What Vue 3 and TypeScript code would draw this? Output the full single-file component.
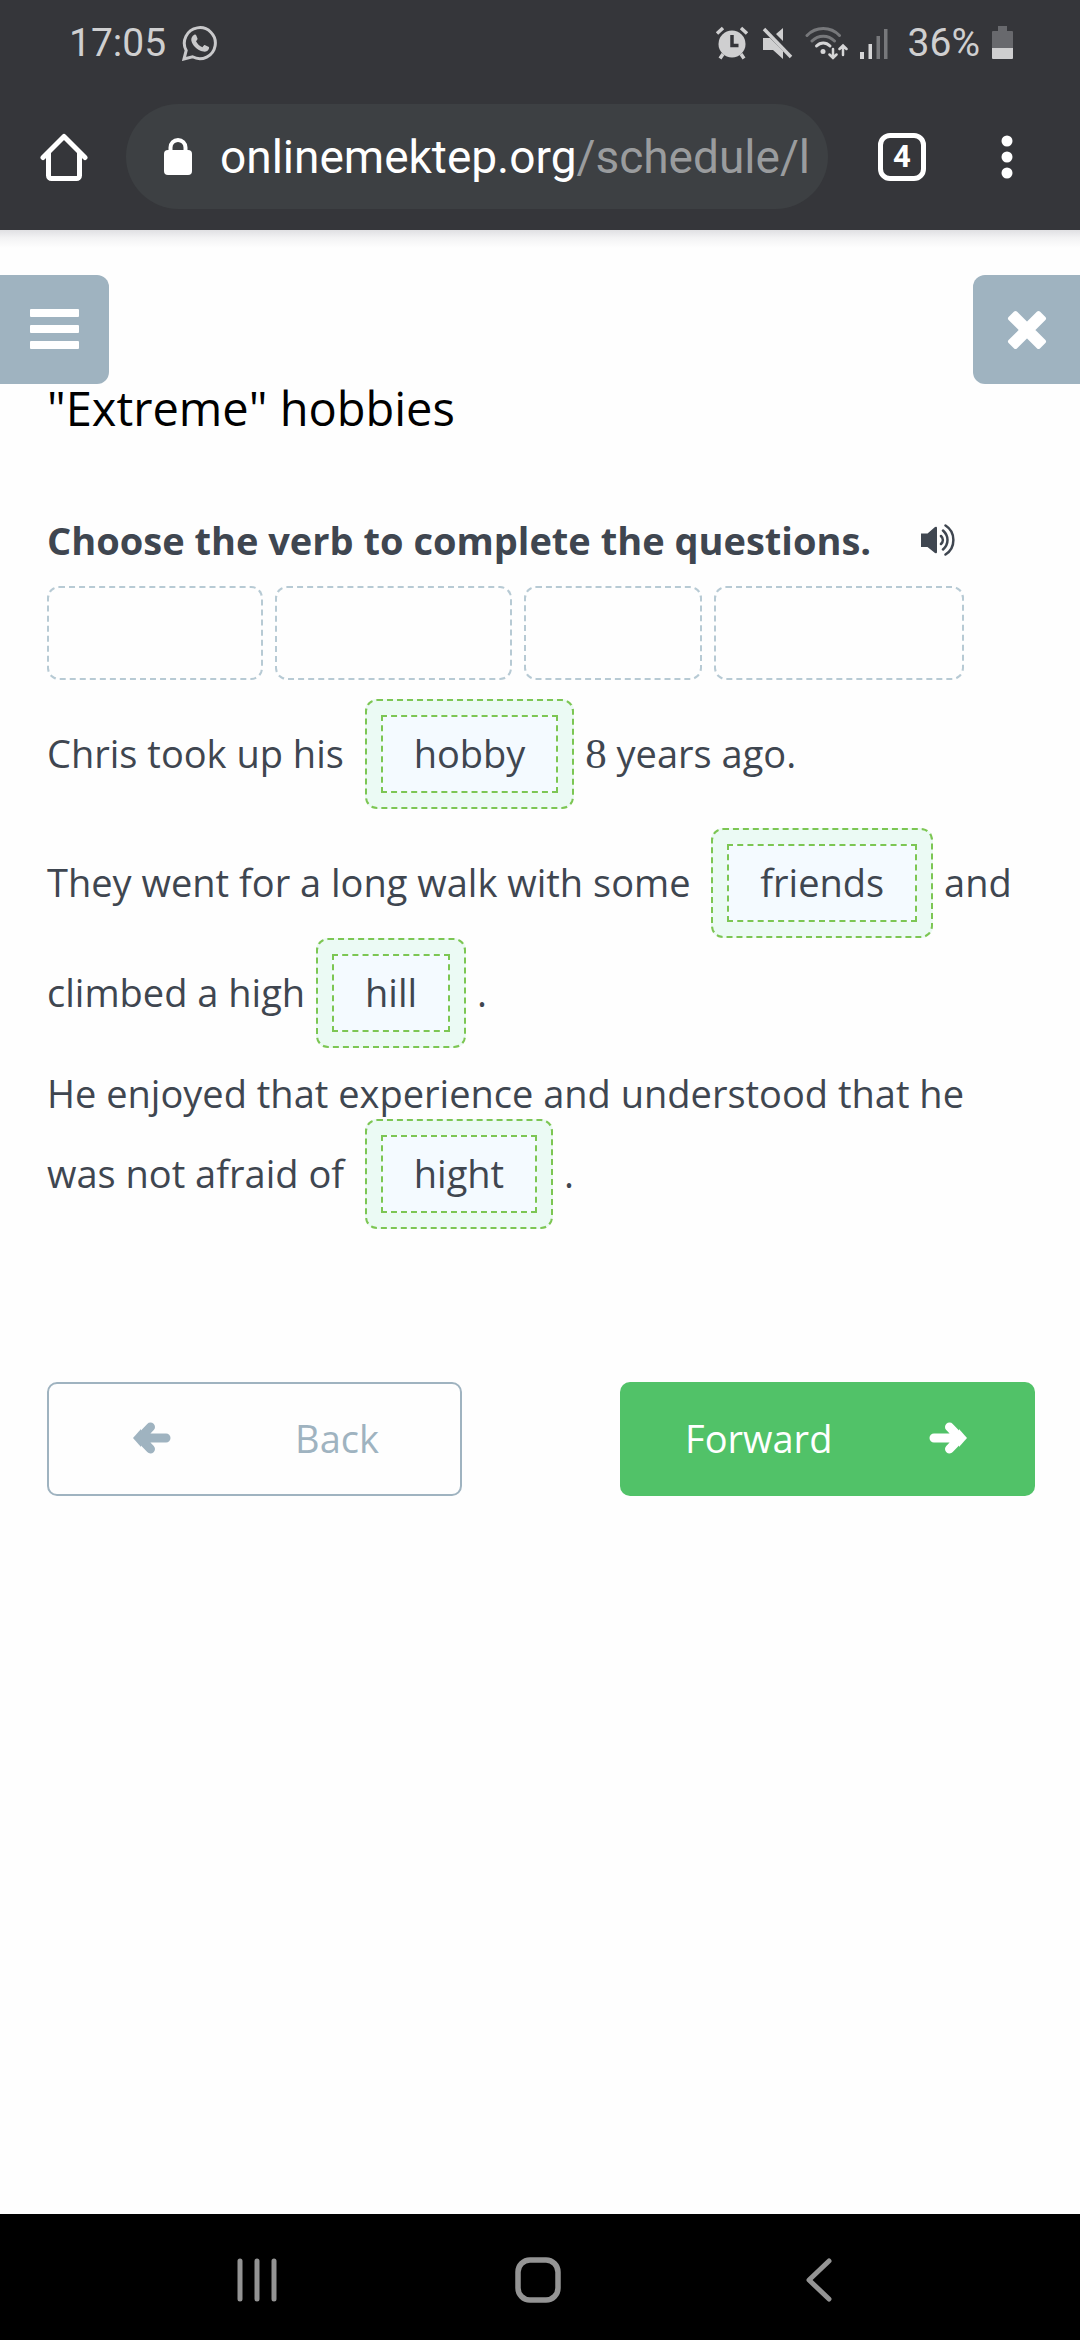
<script setup lang="ts">
interface Slot {
  id: number
  width: number
}

const slots: Slot[] = [
  { id: 1, width: 216 },
  { id: 2, width: 237 },
  { id: 3, width: 178 },
  { id: 4, width: 250 },
]
</script>

<template>
  <div class="screen">
    <header class="chrome">
      <div class="status">
        <span class="clock">17:05</span>
        <svg class="whatsapp" width="36" height="36" viewBox="0 0 36 36" fill="none">
          <path d="M2 34 4.200 25.500A15.500 15.500 0 1 1 10.500 31.800Z" stroke="#c9c9cb" stroke-width="3" stroke-linejoin="miter" />
          <path d="M12.300 9.800c.8-.4 1.700-.1 2 .7l1.200 3c.2.7-.1 1.200-1.500 2.700 1.700 3.200 3.600 4.800 6.500 6 1.600-1.900 1.900-2.300 2.700-2l3.200 1.500c.8.400.8 1 .5 2-.8 2.400-3.300 3.400-5.600 2.900-6.300-1.600-11.100-6.400-12-11.200-.3-2.200.8-4.500 3-5.600Z" fill="#c9c9cb" />
        </svg>
        <div class="indicators">
          <svg width="34" height="34" viewBox="0 0 34 34" fill="none">
            <circle cx="17" cy="18" r="13.500" fill="#cfcfd0" />
            <path d="M2 7.500 8 2M32 7.500 26 2" stroke="#cfcfd0" stroke-width="3.500" />
            <path d="M8 28 5 32.500M26 28l3 4.500" stroke="#cfcfd0" stroke-width="3.500" />
            <path d="M17 9v10.500h6.500" stroke="#35363a" stroke-width="3.500" />
          </svg>
          <svg width="32" height="34" viewBox="0 0 32 34">
            <path fill="#cfcfd0" d="M2 12h7L22 25v8L12 24H2ZM22 2v13l-7-7Z" />
            <path d="M3 3 30 31" stroke="#cfcfd0" stroke-width="3.500" />
          </svg>
          <svg width="43" height="34" viewBox="0 0 43 34" fill="none" stroke-linecap="round">
            <path d="M2 9.500C11 .2 25.500.2 34.500 9.500M7 15c6.500-6.500 16-6.500 22.500 0" stroke="#77787b" stroke-width="3" />
            <path d="M11.500 20c4-4 9.500-4 13.500 0" stroke="#d6d6d7" stroke-width="3" />
            <circle cx="18" cy="25.500" r="2.500" fill="#d6d6d7" />
            <path d="M28 23v9M24.500 28.500 28 32l3.500-3.500M38 29v-9M34.500 23 38 19.500l3.500 3.500" stroke="#d6d6d7" stroke-width="2.500" />
          </svg>
          <svg width="28" height="34" viewBox="0 0 28 34">
            <path fill="#d6d6d7" d="M0 26h4v7H0zM8.500 18h3.500v15H8.500z" />
            <path fill="#77787b" d="M16.500 10H20v23h-3.500zM24 3h3.500v30H24z" />
          </svg>
          <span class="percent">36%</span>
          <svg width="22" height="34" viewBox="0 0 22 34">
            <path fill="#68696d" d="M6 0h9v5h5a1 1 0 0 1 1 1v17H0V6a1 1 0 0 1 1-1h5z" />
            <path fill="#cfcfd0" d="M0 22h21v10a1 1 0 0 1-1 1H1a1 1 0 0 1-1-1z" />
          </svg>
        </div>
      </div>

      <div class="toolbar">
        <button class="tool" type="button" aria-label="Home">
          <svg width="48" height="48" viewBox="0 0 48 48" fill="none" stroke="#fff" stroke-width="5" stroke-linecap="round" stroke-linejoin="round">
            <path d="M3 24.500 24 3.500 45 24.500M8.500 20v22.500a3 3 0 0 0 3 3h25a3 3 0 0 0 3-3V20" />
          </svg>
        </button>
        <a class="address" href="#schedule">
          <svg width="30" height="38" viewBox="0 0 30 38">
            <path d="M7.500 14V9.500a7.500 7.500 0 0 1 15 0V14" fill="none" stroke="#fff" stroke-width="4" />
            <rect x="1" y="12" width="28" height="25" rx="4" fill="#fff" />
          </svg>
          <span class="url">onlinemektep.org<span class="path">/schedule/l</span></span>
        </a>
        <button class="tabs" type="button" aria-label="Open tabs">4</button>
        <button class="tool" type="button" aria-label="More options">
          <svg width="12" height="48" viewBox="0 0 12 48" fill="#fff">
            <circle cx="6" cy="8" r="5.500" />
            <circle cx="6" cy="24" r="5.500" />
            <circle cx="6" cy="40" r="5.500" />
          </svg>
        </button>
      </div>
    </header>

    <main class="page">
      <div class="corner-row">
        <button class="corner left" type="button" aria-label="Menu">
          <svg width="50" height="42" viewBox="0 0 50 42" fill="#fff">
            <rect x="0" y="0" width="49" height="8" rx="1" />
            <rect x="0" y="16" width="49" height="8" rx="1" />
            <rect x="0" y="32" width="49" height="8" rx="1" />
          </svg>
        </button>
        <button class="corner right" type="button" aria-label="Close">
          <svg width="40" height="40" viewBox="0 0 40 40" stroke="#fff" fill="#fff" stroke-width="4" stroke-linejoin="round">
            <path d="M8.500 3 20 14.500 31.500 3 37 8.500 25.500 20 37 31.500 31.500 37 20 25.500 8.500 37 3 31.500 14.500 20 3 8.500Z" />
          </svg>
        </button>
      </div>

      <div class="content">
        <h1 class="title">"Extreme" hobbies</h1>

        <div class="task">
          <h2 class="prompt">Choose the verb to complete the questions.</h2>
          <button class="tool" type="button" aria-label="Listen">
            <svg width="36" height="32" viewBox="0 0 36 32" fill="none" stroke="#3f4650" stroke-linecap="round">
              <path d="M0 9.500h6.500L14 3q2-1 2 1v24q0 2-2 1L6.500 23H0z" fill="#3f4650" stroke="none" />
              <path d="M20 12c2.500 2.500 2.500 5.500 0 8M22 6.500c6 5.500 6 13.500 0 19M24.500 1.500c10.500 6.500 10.500 22.500 0 29" stroke-width="2.500" />
            </svg>
          </button>
        </div>

        <div class="slots">
          <div v-for="slot in slots" :key="slot.id" class="slot" :style="{ width: slot.width + 'px' }"></div>
        </div>

        <p class="sentence">Chris took up his&nbsp; <span class="answer"><span class="word">hobby</span></span> <span class="numeral">8</span> years ago.</p>
        <p class="sentence">They went for a long walk with some&nbsp; <span class="answer"><span class="word">friends</span></span> and <span>climbed a high</span> <span class="answer"><span class="word">hill</span></span> .</p>
        <p class="sentence">He enjoyed that experience and understood that he<br>was not afraid of&nbsp; <span class="answer"><span class="word">hight</span></span> .</p>

        <div class="actions">
          <button class="action back" type="button">
            <svg width="38" height="32" viewBox="0 0 38 32" fill="none" stroke="currentColor" stroke-width="9" stroke-linecap="round">
              <path d="M9 16h24M17.500 5 7 16l10.500 11" />
              <path d="M0 16 8 7v18z" fill="currentColor" stroke="none" />
            </svg>
            <span>Back</span>
          </button>
          <button class="action forward" type="button">
            <span>Forward</span>
            <svg width="38" height="32" viewBox="0 0 38 32" fill="none" stroke="currentColor" stroke-width="9" stroke-linecap="round">
              <path d="M29 16H5M20.500 5 31 16 20.500 27" />
              <path d="M38 16 30 7v18z" fill="currentColor" stroke="none" />
            </svg>
          </button>
        </div>
      </div>
    </main>

    <nav class="system">
      <button class="tool" type="button" aria-label="Recent apps">
        <svg width="48" height="48" viewBox="0 0 48 48" stroke="#949494" stroke-width="5" stroke-linecap="round">
          <path d="M7 5v38M24 5v38M41 5v38" />
        </svg>
      </button>
      <button class="tool" type="button" aria-label="Home screen">
        <svg width="48" height="48" viewBox="0 0 48 48" fill="none" stroke="#949494" stroke-width="5.500">
          <rect x="4" y="4" width="40" height="40" rx="12" />
        </svg>
      </button>
      <button class="tool" type="button" aria-label="Go back">
        <svg width="48" height="48" viewBox="0 0 48 48" fill="none" stroke="#949494" stroke-width="5" stroke-linecap="round" stroke-linejoin="round">
          <path d="M34 5 14 24l20 19" />
        </svg>
      </button>
    </nav>
  </div>
</template>

<style>
body {
  margin: 0;
}
</style>

<style scoped>
.screen {
  display: flex;
  flex-direction: column;
  min-height: 100vh;
  background: #fefefe;
  color: #3f4650;
  font-family: "Open Sans", "Noto Sans", sans-serif;
}

svg {
  display: block;
  flex: none;
}

button {
  margin: 0;
  padding: 0;
  border: 0;
  background: none;
  font: inherit;
  color: inherit;
}

.chrome {
  background: #35363a;
  padding-bottom: 21px;
  font-family: Roboto, sans-serif;
}

.status {
  display: flex;
  align-items: center;
  height: 86px;
  padding: 0 66px 0 69px;
  color: #cfcfd0;
  font-size: 39px;
}

.whatsapp {
  margin-left: 16px;
}

.indicators {
  display: flex;
  align-items: center;
  gap: 12px;
  margin-left: auto;
}

.percent {
  margin-left: 8px;
}

.toolbar {
  display: flex;
  align-items: center;
  height: 105px;
  margin-top: 18px;
  padding: 0 67px 0 40px;
}

.address {
  display: flex;
  flex: 1;
  align-items: center;
  gap: 27px;
  height: 105px;
  min-width: 0;
  margin: 0 50px 0 38px;
  padding: 0 16px 0 37px;
  box-sizing: border-box;
  border-radius: 53px;
  background: #3d4043;
  color: #fff;
  font-size: 46px;
  text-decoration: none;
}

.url {
  white-space: nowrap;
}

.path {
  color: #9a9c9e;
}

.tabs {
  width: 48px;
  height: 48px;
  margin-right: 75px;
  border: 5px solid #fff;
  border-radius: 12px;
  color: #fff;
  font-size: 31px;
  font-weight: 700;
  line-height: 38px;
}

.page {
  flex: 1;
  padding-top: 45px;
  background: linear-gradient(#e0e0e3, #f3f3f4 8px, #fefefe 18px);
}

.corner-row {
  display: flex;
  justify-content: space-between;
}

.corner {
  display: flex;
  align-items: center;
  justify-content: center;
  width: 109px;
  height: 109px;
  background: #9fb3c0;
}

.left {
  border-radius: 0 12px 12px 0;
}

.right {
  width: 107px;
  border-radius: 12px 0 0 12px;
}

.content {
  padding: 0 45px 0 47px;
  font-size: 38px;
  line-height: 52px;
}

.title {
  margin: 0;
  color: #000;
  font-size: 47px;
  font-weight: 400;
  line-height: 48px;
}

.task {
  display: flex;
  align-items: center;
  gap: 50px;
  margin-top: 82px;
}

.prompt {
  margin: 0;
  font-size: 38px;
  font-weight: 700;
}

.slots {
  display: flex;
  gap: 12px;
  margin-top: 20px;
}

.slot {
  height: 94px;
  box-sizing: border-box;
  border: 2px dashed #b7cad4;
  border-radius: 12px;
}

.sentence {
  margin: 19px 0 0;
}

.answer {
  display: inline-block;
  margin: 0 1px;
  padding: 14px;
  border: 2px dashed #7cc653;
  border-radius: 12px;
  background: #ebfaf4;
}

.word {
  display: block;
  padding: 10px 31px 12px;
  border: 2px dashed #7cc653;
  background: #f4faff;
}

.numeral {
  font-family: "Liberation Serif", serif;
  font-size: 43px;
  line-height: 1;
}

.actions {
  display: flex;
  justify-content: space-between;
  margin-top: 153px;
}

.action {
  display: flex;
  align-items: center;
  justify-content: space-between;
  width: 42%;
  height: 114px;
  box-sizing: border-box;
  border: 2px solid transparent;
  border-radius: 10px;
}

.back {
  padding: 0 81px 2px 84px;
  border-color: #9fb3c0;
  color: #9fb3c0;
}

.forward {
  padding: 0 66px 2px 63px;
  background: #51c268;
  color: #fff;
}

.system {
  display: flex;
  align-items: center;
  justify-content: center;
  gap: 233px;
  height: 126px;
  padding: 5px 4px 0 0;
  box-sizing: border-box;
  background: #000;
}
</style>
